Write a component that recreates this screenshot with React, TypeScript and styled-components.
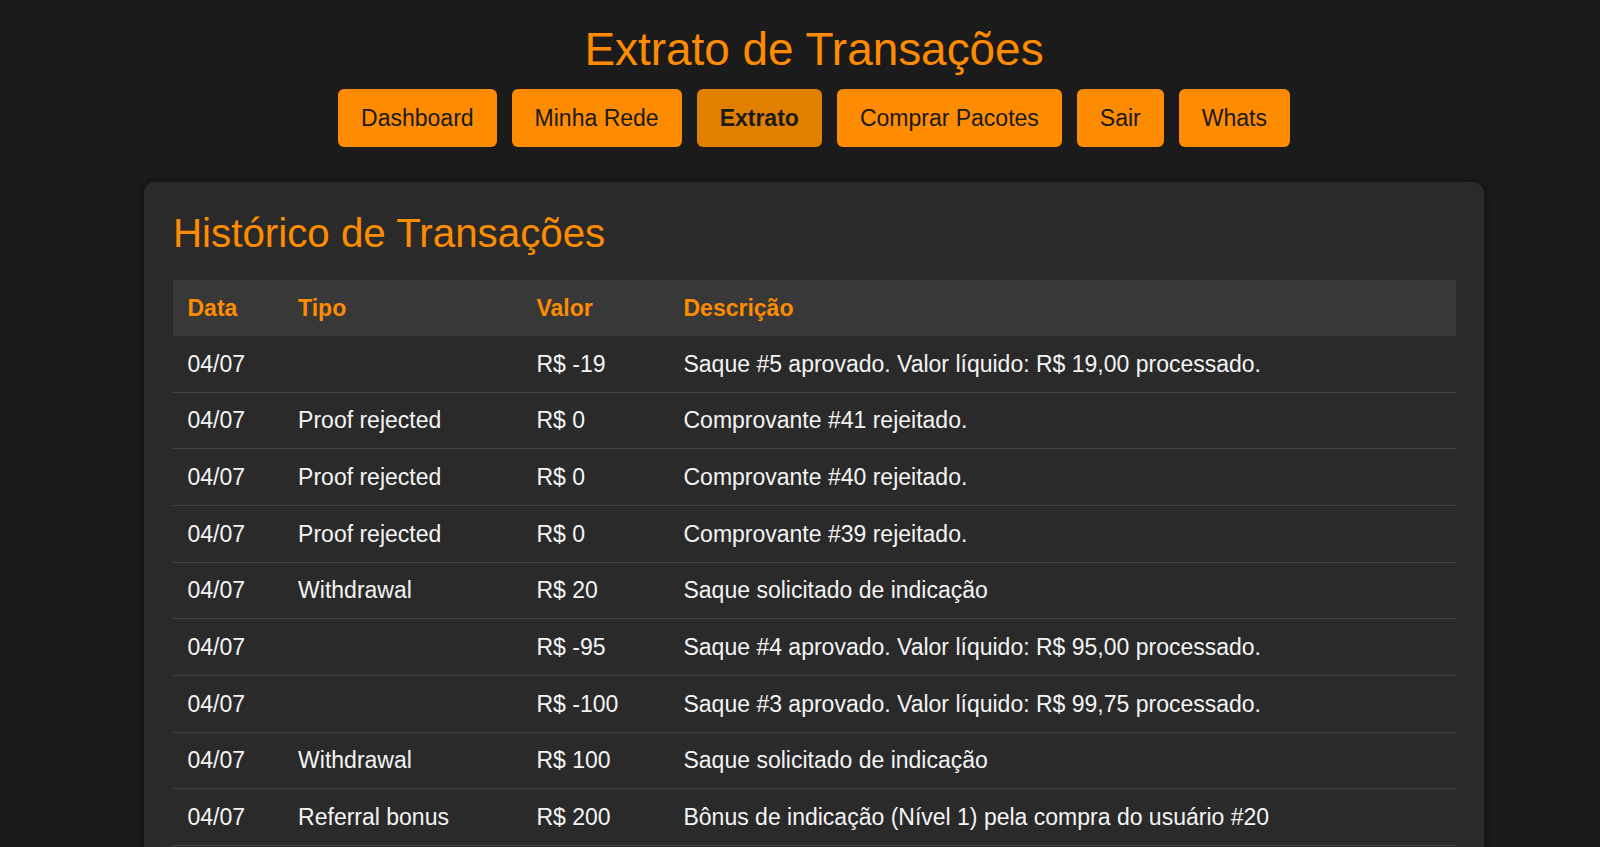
import React from "react";
import styled, { createGlobalStyle } from "styled-components";

const GlobalStyle = createGlobalStyle`
  html, body {
    margin: 0;
    padding: 0;
    background: #1b1b1b;
  }
  body {
    font-family: "Liberation Sans", Arial, sans-serif;
    color: #f2f2f2;
  }
  * { box-sizing: border-box; }
`;

const Page = styled.div`
  min-height: 847px;
  padding: 22.6px 0 0 28px;
  display: flex;
  flex-direction: column;
  align-items: center;
`;

const Title = styled.h1`
  margin: 0;
  font-size: 45.9px;
  font-weight: 400;
  line-height: 52.9px;
  color: #ff8c00;
`;

const Nav = styled.nav`
  display: flex;
  gap: 15px;
  margin-top: 13.8px;
`;

const NavButton = styled.a<{ $active?: boolean }>`
  display: block;
  padding: 15.8px 23px;
  font-size: 23px;
  line-height: 26.3px;
  font-weight: ${(p) => (p.$active ? 700 : 400)};
  color: #1a1a1a;
  background: ${(p) => (p.$active ? "#e07f00" : "#ff8c00")};
  border-radius: 6px;
  text-decoration: none;
  cursor: pointer;
`;

const Card = styled.section`
  width: 1340px;
  margin-top: 34.4px;
  padding: 29px 28px 29px 29px;
  background: #2a2a2a;
  border-radius: 11px;
  box-shadow: 0 0 12px rgba(0, 0, 0, 0.45);
`;

const CardTitle = styled.h2`
  margin: 0 0 23.3px;
  font-size: 40.3px;
  line-height: 46px;
  font-weight: 400;
  color: #ff8c00;
`;

const Table = styled.table`
  width: 1283px;
  border-collapse: collapse;
  table-layout: fixed;
  font-size: 23px;
  line-height: 26.3px;
`;

const HeadCell = styled.th`
  padding: 14.85px 14.5px;
  text-align: left;
  font-weight: 700;
  color: #ff8c00;
  background: #383838;
`;

const Row = styled.tr`
  border-bottom: 1px solid #444444;
`;

const Cell = styled.td`
  padding: 14.7px 14.5px;
  color: #f4f4f4;
  white-space: nowrap;
`;

const tabs = [
  { label: "Dashboard" },
  { label: "Minha Rede" },
  { label: "Extrato", active: true },
  { label: "Comprar Pacotes" },
  { label: "Sair" },
  { label: "Whats" },
];

const rows = [
  ["04/07", "", "R$ -19", "Saque #5 aprovado. Valor líquido: R$ 19,00 processado."],
  ["04/07", "Proof rejected", "R$ 0", "Comprovante #41 rejeitado."],
  ["04/07", "Proof rejected", "R$ 0", "Comprovante #40 rejeitado."],
  ["04/07", "Proof rejected", "R$ 0", "Comprovante #39 rejeitado."],
  ["04/07", "Withdrawal", "R$ 20", "Saque solicitado de indicação"],
  ["04/07", "", "R$ -95", "Saque #4 aprovado. Valor líquido: R$ 95,00 processado."],
  ["04/07", "", "R$ -100", "Saque #3 aprovado. Valor líquido: R$ 99,75 processado."],
  ["04/07", "Withdrawal", "R$ 100", "Saque solicitado de indicação"],
  ["04/07", "Referral bonus", "R$ 200", "Bônus de indicação (Nível 1) pela compra do usuário #20"],
];

export default function App() {
  return (
    <>
      <GlobalStyle />
      <Page>
        <Title>Extrato de Transações</Title>
        <Nav>
          {tabs.map((t) => (
            <NavButton key={t.label} $active={t.active}>
              {t.label}
            </NavButton>
          ))}
        </Nav>
        <Card>
          <CardTitle>Histórico de Transações</CardTitle>
          <Table>
            <colgroup>
              <col style={{ width: "110.6px" }} />
              <col style={{ width: "238.4px" }} />
              <col style={{ width: "147px" }} />
              <col />
            </colgroup>
            <thead>
              <tr>
                <HeadCell>Data</HeadCell>
                <HeadCell>Tipo</HeadCell>
                <HeadCell>Valor</HeadCell>
                <HeadCell>Descrição</HeadCell>
              </tr>
            </thead>
            <tbody>
              {rows.map((r, i) => (
                <Row key={i}>
                  {r.map((c, j) => (
                    <Cell key={j}>{c}</Cell>
                  ))}
                </Row>
              ))}
            </tbody>
          </Table>
        </Card>
      </Page>
    </>
  );
}
